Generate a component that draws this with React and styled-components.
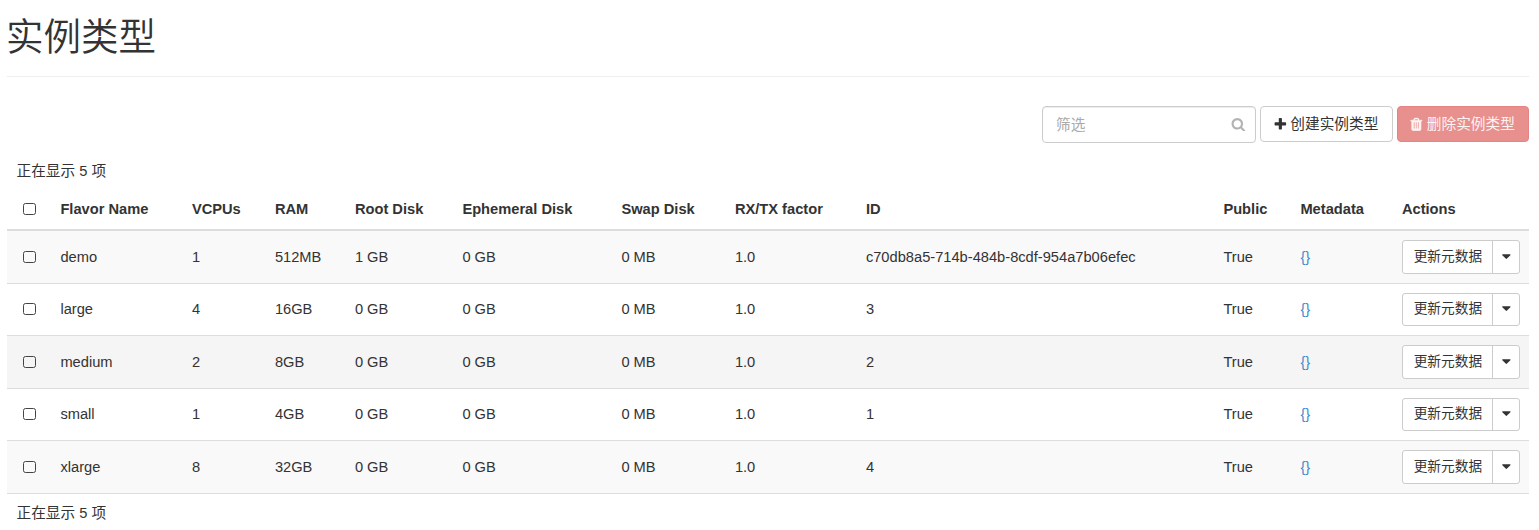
import React from 'react';
import styled, { createGlobalStyle } from 'styled-components';

const GlobalStyle = createGlobalStyle`
  * { box-sizing: border-box; }
  body {
    margin: 0;
    background: #fff;
    color: #333;
    font-family: "Liberation Sans", "Noto Sans CJK SC", sans-serif;
    font-size: 14.67px;
    line-height: 21px;
  }
`;

const Page = styled.main`
  padding: 0 10px 0 7px;
  height: 530px;
  overflow: hidden;
`;

const Title = styled.h1`
  margin: 0 0 29px;
  height: 77px;
  padding-top: 13px;
  border-bottom: 1px solid #eee;
  font-family: "Noto Sans CJK SC DemiLight", "Noto Sans CJK SC", sans-serif;
  font-size: 37.5px;
  font-weight: 350;
  line-height: 41px;
  text-indent: -1px;
`;

const Toolbar = styled.div`
  display: flex;
  justify-content: flex-end;
  align-items: flex-start;
  gap: 4px;
  height: 55px;
`;

const Search = styled.label`
  display: flex;
  align-items: center;
  width: 214px;
  height: 37px;
  padding: 0 9.3px 1px 13px;
  border: 1px solid #ccc;
  border-radius: 4px;
  box-shadow: inset 0 1px 1px rgba(0, 0, 0, 0.075);
  color: #b3b3b3;
`;

const SearchInput = styled.input`
  flex: 1;
  min-width: 0;
  padding: 2px 0 0;
  border: 0;
  outline: 0;
  background: transparent;
  font: inherit;
  color: #333;
  &::placeholder { color: #aaa; opacity: 1; }
`;

const Button = styled.button`
  display: flex;
  align-items: center;
  justify-content: center;
  gap: 3px;
  width: ${(p) => p.$width}px;
  height: 36px;
  padding: 0 2px 0 0;
  border: 1px solid ${(p) => (p.$danger ? '#e58482' : '#ccc')};
  border-radius: 4px;
  background: ${(p) => (p.$danger ? '#e8908d' : '#fff')};
  color: ${(p) => (p.$danger ? '#fdf3f3' : '#333')};
  font: inherit;
  white-space: nowrap;
`;

const Glyph = styled.svg`
  flex: none;
  width: 14.7px;
  height: 14.7px;
  fill: currentColor;
  stroke: currentColor;
  stroke-width: ${(p) => (p.$bold ? 50 : 0)};
`;

const Count = styled.div`
  height: 28px;
  padding: 0 9.5px;
`;

const Table = styled.table`
  width: 1522px;
  margin-bottom: 9px;
  table-layout: fixed;
  border-collapse: separate;
  border-spacing: 0;
`;

const HeadCell = styled.th`
  height: 42px;
  padding: 0 0 0 9.4px;
  border-bottom: 2px solid #ddd;
  text-align: left;
  font-weight: 700;
  white-space: nowrap;
`;

const Cell = styled.td`
  padding: 0 0 0 9.4px;
  border-bottom: 1px solid #ddd;
  white-space: nowrap;
`;

const Row = styled.tr`
  height: 52px;
  &:nth-child(odd) { height: 53px; background: #f9f9f9; }
  &:nth-child(3) { background: #f5f5f5; }
`;

const Checkbox = styled.input.attrs({ type: 'checkbox' })`
  appearance: none;
  display: block;
  width: 13px;
  height: 12px;
  margin: 0 0 0 6.6px;
  border: 1px solid #444;
  border-radius: 2.5px;
  background: transparent;
  ${Row}:nth-child(even) & { margin-bottom: 1px; }
`;

const MetaLink = styled.a`
  color: #428bca;
  text-decoration: none;
`;

const ButtonGroup = styled.div`
  display: flex;
  width: 118px;
  height: 33px;
  border: 1px solid #ccc;
  border-radius: 3px;
  background: #fff;
  ${Row}:nth-child(odd) & { height: 34px; }
`;

const GroupAction = styled.button`
  width: 89px;
  padding: 0 0 2px 1px;
  border: 0;
  background: none;
  color: #333;
  font: inherit;
  font-size: 13.7px;
  white-space: nowrap;
`;

const GroupToggle = styled.button`
  display: flex;
  flex: 1;
  align-items: center;
  justify-content: center;
  padding: 0 0 2px 1px;
  border: 0;
  border-left: 1px solid #ccc;
  background: none;
  color: #333;
`;

const PATHS = {
  plus: 'M1600 736v192q0 40-28 68t-68 28h-416v416q0 40-28 68t-68 28h-192q-40 0-68-28t-28-68v-416h-416q-40 0-68-28t-28-68v-192q0-40 28-68t68-28h416v-416q0-40 28-68t68-28h192q40 0 68 28t28 68v416h416q40 0 68 28t28 68z',
  search: 'M1216 832q0-185-131.5-316.5t-316.5-131.5-316.5 131.5-131.5 316.5 131.5 316.5 316.5 131.5 316.5-131.5 131.5-316.5zm512 832q0 52-38 90t-90 38q-54 0-90-38l-343-342q-179 124-399 124-143 0-273.5-55.5t-225-150-150-225-55.5-273.5 55.5-273.5 150-225 225-150 273.5-55.5 273.5 55.5 225 150 150 225 55.5 273.5q0 220-124 399l343 343q37 37 37 90z',
  trash: 'M704 1376v-704q0-14-9-23t-23-9h-64q-14 0-23 9t-9 23v704q0 14 9 23t23 9h64q14 0 23-9t9-23zm256 0v-704q0-14-9-23t-23-9h-64q-14 0-23 9t-9 23v704q0 14 9 23t23 9h64q14 0 23-9t9-23zm256 0v-704q0-14-9-23t-23-9h-64q-14 0-23 9t-9 23v704q0 14 9 23t23 9h64q14 0 23-9t9-23zm-544-992h448l-48-117q-7-9-17-11h-317q-10 2-17 11zm928 32v64q0 14-9 23t-23 9h-96v948q0 83-47 143.5t-113 60.5h-832q-66 0-113-58.5t-47-141.5v-952h-96q-14 0-23-9t-9-23v-64q0-14 9-23t23-9h309l70-167q15-37 54-63t79-26h320q40 0 79 26t54 63l70 167h309q14 0 23 9t9 23z',
  caret: 'M1408 704q0 26-19 45l-448 448q-19 19-45 19t-45-19l-448-448q-19-19-19-45t19-45 45-19h896q26 0 45 19t19 45z',
};

const Icon = ({ name, bold }) => (
  <Glyph viewBox="0 0 1792 1792" $bold={bold} aria-hidden="true">
    <path d={PATHS[name]} />
  </Glyph>
);

const COLUMNS = [
  ['Flavor Name', 131.5],
  ['VCPUs', 83],
  ['RAM', 80],
  ['Root Disk', 107.5],
  ['Ephemeral Disk', 159],
  ['Swap Disk', 113.5],
  ['RX/TX factor', 131],
  ['ID', 357.5],
  ['Public', 77],
  ['Metadata', 101.5],
  ['Actions', 136.5],
];

const FLAVORS = [
  ['demo', '1', '512MB', '1 GB', '0 GB', '0 MB', '1.0', 'c70db8a5-714b-484b-8cdf-954a7b06efec', 'True'],
  ['large', '4', '16GB', '0 GB', '0 GB', '0 MB', '1.0', '3', 'True'],
  ['medium', '2', '8GB', '0 GB', '0 GB', '0 MB', '1.0', '2', 'True'],
  ['small', '1', '4GB', '0 GB', '0 GB', '0 MB', '1.0', '1', 'True'],
  ['xlarge', '8', '32GB', '0 GB', '0 GB', '0 MB', '1.0', '4', 'True'],
];

export default function App() {
  return (
    <>
      <GlobalStyle />
      <Page>
        <Title>实例类型</Title>
        <Toolbar>
          <Search>
            <SearchInput placeholder="筛选" />
            <Icon name="search" />
          </Search>
          <Button $width={133}>
            <Icon name="plus" />
            创建实例类型
          </Button>
          <Button $width={132} $danger>
            <Icon name="trash" bold />
            删除实例类型
          </Button>
        </Toolbar>
        <Count>正在显示 5 项</Count>
        <Table>
          <colgroup>
            <col width="44" />
            {COLUMNS.map(([name, width]) => (
              <col key={name} style={{ width }} />
            ))}
          </colgroup>
          <thead>
            <tr>
              <HeadCell><Checkbox /></HeadCell>
              {COLUMNS.map(([name]) => (
                <HeadCell key={name}>{name}</HeadCell>
              ))}
            </tr>
          </thead>
          <tbody>
            {FLAVORS.map((flavor) => (
              <Row key={flavor[0]}>
                <Cell><Checkbox /></Cell>
                {flavor.map((value, i) => (
                  <Cell key={i}>{value}</Cell>
                ))}
                <Cell><MetaLink href="#">{'{}'}</MetaLink></Cell>
                <Cell>
                  <ButtonGroup>
                    <GroupAction>更新元数据</GroupAction>
                    <GroupToggle aria-label="更多"><Icon name="caret" /></GroupToggle>
                  </ButtonGroup>
                </Cell>
              </Row>
            ))}
          </tbody>
        </Table>
        <Count>正在显示 5 项</Count>
      </Page>
    </>
  );
}
